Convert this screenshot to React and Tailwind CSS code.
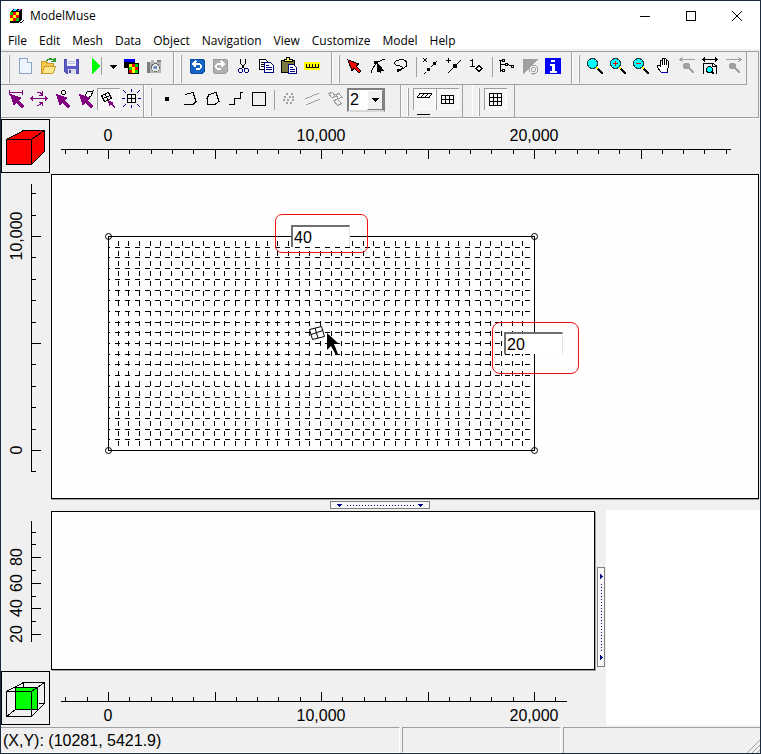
import React from 'react';

const GRAY = '#a0a0a0';
const PURPLE = '#800080';

function Tool({ label, pressed, narrow, children }) {
  return (
    <button
      type="button"
      aria-label={label}
      className={
        (narrow ? 'w-[14px] ' : 'w-[23px] ') +
        'h-[22px] shrink-0 ' +
        (pressed ? 'bg-[#f7f7f7] shadow-[inset_1px_1px_0_#a0a0a0,inset_-1px_-1px_0_#ffffff]' : '')
      }
    >
      <svg
        width={narrow ? 14 : 23}
        height="22"
        fill="none"
        stroke="#000"
        shapeRendering="crispEdges"
        className="block overflow-visible"
      >
        {children}
      </svg>
    </button>
  );
}

function Grip() {
  return <span className="mr-[4px] ml-[5px] h-[28px] w-[2px] shrink-0 border-r border-l border-r-[#a0a0a0] border-l-white" />;
}

function Separator() {
  return <span className="mx-[3px] mt-[2px] h-[20px] w-px shrink-0 bg-[#a0a0a0]" />;
}

function Band({ className = '', grip = true, children }) {
  return (
    <div className={'flex h-[32px] shrink-0 items-start border-r border-l border-r-[#a0a0a0] border-l-white pt-[3px] ' + className}>
      {grip && <Grip />}
      {children}
    </div>
  );
}

function Magnifier({ sign }) {
  return (
    <>
      <path d="M13 13l6 6" stroke="#000" strokeWidth="2.5" />
      <path d="M12 12l2 2" stroke="#ffff00" strokeWidth="2" />
      <circle cx="8.5" cy="8.5" r="5" fill="#00ffff" stroke="#204040" />
      {sign && <path d="M6 8.5h5" stroke="#e00000" />}
      {sign === '+' && <path d="M8.5 6v5" stroke="#e00000" />}
    </>
  );
}

function GrayPan({ flip }) {
  return (
    <g stroke={GRAY}>
      <path d="M4 4.5h15" />
      <path d={flip ? 'M16 2l3 2.5l-3 2.5' : 'M7 2l-3 2.5l3 2.5'} />
      <circle cx="10.5" cy="11" r="3" fill={GRAY} />
      <path d="M13 13l5 5" strokeWidth="2.5" />
    </g>
  );
}

function PurpleArrow() {
  return <path d="M5 6l12 4l-3 2l5 6l-2 2l-6-5l-2 3z" fill={PURPLE} stroke="none" />;
}

function MainToolbar() {
  return (
    <div className="flex h-[33px] w-fit border-b border-[#a0a0a0]">
      <Band className="w-[173px] pl-px">
        <Tool label="New">
          <path d="M5.500 3.500h8l4 4V18.500H5.500z" fill="#eef5ff" stroke="#8aa4c8" />
          <path d="M13.500 3.500v4h4" fill="#fff" stroke="#8aa4c8" />
        </Tool>
        <Tool label="Open">
          <path d="M4.500 17.500v-11h5l1 2h6v9z" fill="#f5c84c" stroke="#c89a28" />
          <path d="M5 18l3-7h11l-3 7z" fill="#ffe68c" stroke="#c89a28" />
          <path d="M10 6c2-3 5-3 7 0M14 6.500h4V3" stroke="#2c9a2c" strokeWidth="1.500" />
        </Tool>
        <Tool label="Save">
          <path d="M4.500 4.500h14v14h-12l-2-2z" fill="#5a5ac8" stroke="#4a4aa8" />
          <path d="M7 4h9v7H7z" fill="#f4f4ff" stroke="none" />
          <path d="M8 6.500h7M8 8.500h7" stroke="#b8b8d8" />
          <path d="M8 14h8v5H8z" fill="#d8d8e8" stroke="none" />
          <path d="M9 15h2v3H9z" fill="#4a4aa8" stroke="none" />
        </Tool>
        <Tool label="Run model">
          <path d="M9 3l8 8l-8 8z" fill="#00ff00" stroke="none" />
          <path d="M18.500 2v18" stroke={GRAY} />
        </Tool>
        <Tool label="Run options" narrow>
          <path d="M4 10h7L7.500 14z" fill="#000" stroke="none" />
        </Tool>
        <Tool label="Model selection">
          <path d="M4 4h11v9H4z" fill="#000" stroke="none" />
          <path d="M4 4h11v3H4z" fill="#0000ff" stroke="none" />
          <path d="M8 8h11v11H8z" fill="#000" stroke="none" />
          <path d="M9 9h9v9h-9z" fill="#ffff00" stroke="none" />
          <path d="M12 9h3v3h-3zM9 15h3v3h-3zM15 12h3v3h-3z" fill="#ff0000" stroke="none" />
          <path d="M9 12h3v3h-3zM15 15h3v3h-3zM15 9h3v3h-3z" fill="#00d000" stroke="none" />
        </Tool>
        <Tool label="Export image">
          <path d="M4 7h4V5h3v2h7v11H4z" fill="#b4b4b4" stroke="none" />
          <path d="M4 7h3v11H4zM14 5h4v2h-4z" fill="#7c7c7c" stroke="none" />
          <circle cx="12.500" cy="12.500" r="4" fill="#e8e8e8" stroke="#707070" />
          <circle cx="12.500" cy="12.500" r="1.500" fill="#6a8cc0" stroke="#6a8cc0" />
        </Tool>
      </Band>
      <Band className="w-[158px]">
        <Tool label="Undo">
          <rect x="4" y="4" width="14" height="14" rx="1" fill="#1464c8" stroke="#0c4a9c" />
          <path d="M7 9h5c4 0 4 5 0 5h-2M10 6l-3 3l3 3" stroke="#fff" strokeWidth="1.500" />
        </Tool>
        <Tool label="Redo">
          <rect x="4" y="4" width="14" height="14" rx="1" fill="#b0b0b0" stroke="#989898" />
          <path d="M15 9h-5c-4 0-4 5 0 5h2M12 6l3 3l-3 3" stroke="#fff" strokeWidth="1.500" />
        </Tool>
        <Tool label="Cut">
          <path d="M8.500 4v4l4 6M13.500 4v4l-4 6" stroke="#000" />
          <circle cx="8.500" cy="15.500" r="2" stroke="#000080" />
          <circle cx="14.500" cy="15.500" r="2" stroke="#000080" />
        </Tool>
        <Tool label="Copy">
          <path d="M4.500 4.500h6l2 2v8h-8z" fill="#fff" />
          <path d="M6 7.500h3M6 9.500h5M6 11.500h5" />
          <path d="M9.500 7.500h6l3 3v7h-9z" fill="#fff" stroke="#000080" />
          <path d="M11 10.500h3M11 12.500h6M11 14.500h6" stroke="#000080" />
        </Tool>
        <Tool label="Paste">
          <path d="M3.500 5.500h13v12h-13z" fill="#7a7a3c" />
          <path d="M6 6.500h8v-2h-2l-1-2H9l-1 2H6z" fill="#ffff60" />
          <path d="M10.500 9.500h5l3 3v6h-8z" fill="#fff" stroke="#000080" />
          <path d="M12 12.500h3M12 14.500h5M12 16.500h5" stroke="#000080" />
        </Tool>
        <Tool label="Measure">
          <path d="M3 7h16v8H3z" fill="#ffff00" stroke="none" />
          <path d="M5 12.500h13M5.500 9v4M8.500 9v4M11.500 9v4M14.500 9v4M17.500 9v4" />
        </Tool>
      </Band>
      <Band className="w-[240px]">
        <Tool label="Select objects">
          <path d="M4 5l11 4l-3 2l5 5l-2 2l-5-5l-2 3z" fill="#ff0000" stroke="#000" />
        </Tool>
        <Tool label="Select nodes">
          <path d="M4 18q1-5 4-8l3-3q3-2 7-3" />
          <path d="M7 6h4v3H7z" fill="#000" stroke="none" />
          <path d="M10 8l6 7h-3l1 3l-2-2l-2 1z" fill="#000" />
        </Tool>
        <Tool label="Lasso">
          <path d="M9 16h-2v-2h4q7-2 6-6q-1-4-8-3q-5 1-4 4q1 2 5 2q3 1 2 3q-1 2-4 2" />
        </Tool>
        <Separator />
        <Tool label="Delete segment">
          <path d="M3 3l4 4M7 3l-4 4" />
          <path d="M4 19L18 5" strokeDasharray="3 2" />
          <path d="M7 13h3v3H7zM13 7h3v3h-3z" fill="#000" stroke="none" />
        </Tool>
        <Tool label="Insert node">
          <path d="M3 5.500h5M5.500 3v5M5 18L18 5" />
          <path d="M10 9h4v4h-4z" fill="#000" stroke="none" />
        </Tool>
        <Tool label="Edit vertex values">
          <path d="M4 5.500h2M6.500 4v7M4 11.500h5M10 13.500l3-3l3 3l-3 3z" />
        </Tool>
        <Separator />
        <Tool label="Show or hide objects">
          <path d="M3 5.500h4M4.500 5v12M4 9.500h6M4 15.500h3M12 9.500l4 2" />
          <path d="M6.500 4.500h2v2h-2zM9.500 8.500h2v2h-2zM6.500 14.500h2v2h-2zM15.500 10.500h2v2h-2z" fill="#fff" />
        </Tool>
        <Tool label="Show contours">
          <path d="M4 4h15L4 19z" fill={GRAY} stroke="none" />
          <circle cx="14.500" cy="14.500" r="4.500" fill="#f0f0f0" stroke={GRAY} />
          <circle cx="14.500" cy="14.500" r="2" stroke={GRAY} />
        </Tool>
        <Tool label="Information">
          <path d="M3 3h16v16H3z" fill="#0000ff" stroke="none" />
          <path d="M9 5h4v2H9zM8 9h5v7h2v2H8v-2h2v-5H8z" fill="#fff" stroke="none" />
        </Tool>
      </Band>
      <Band className="w-[175px]">
        <Tool label="Zoom"><Magnifier /></Tool>
        <Tool label="Zoom in"><Magnifier sign="+" /></Tool>
        <Tool label="Zoom out"><Magnifier sign="-" /></Tool>
        <Tool label="Pan">
          <path
            d="M8 17l-4-5q0-3 3-1V6q1-2 2 0v4V4q1-2 2 0v6V4q1-2 2 0v6V6q2-2 2 0v7l-1 4z"
            fill="#fff"
          />
          <path d="M8 17.500h7" stroke="#0000c0" />
        </Tool>
        <Tool label="Previous view"><GrayPan /></Tool>
        <Tool label="Zoom to extents">
          <path d="M4 4.500h14M6 2.500l-2 2l2 2M16 2.500l2 2l-2 2M4.500 19v-11h9l4 3v8" />
          <path d="M13.500 8v3h4" />
          <circle cx="10.500" cy="14.500" r="3" fill="#00ffff" />
          <path d="M13 17l2 2" strokeWidth="1.500" />
        </Tool>
        <Tool label="Next view"><GrayPan flip /></Tool>
      </Band>
    </div>
  );
}

function DrawToolbar() {
  return (
    <div className="flex h-[33px] border-b border-[#a0a0a0]">
      <Band grip={false} className="w-[143px] pl-[3px]">
        <Tool label="Delete grid line">
          <path d="M4 4.500h14M4.500 2v5M17.500 2v5" stroke={PURPLE} />
          <PurpleArrow />
        </Tool>
        <Tool label="Move grid line">
          <path d="M3 10.500h16M5 8.500l-2 2l2 2M17 8.500l2 2l-2 2M9 5q3-2 5 2M14 3v4h-3M9 17q3 1 5-3M14 18v-4h-3" stroke={PURPLE} />
        </Tool>
        <Tool label="Move node">
          <circle cx="12.500" cy="4.500" r="2" />
          <PurpleArrow />
        </Tool>
        <Tool label="Move element">
          <path d="M11 8l2-4l6-1l-2 5l-4 2z" fill="#fff" />
          <PurpleArrow />
        </Tool>
        <Tool label="Generate grid" pressed>
          <path d="M4.500 7.500l7-3l3 6l-7 3zM8 6l3 6M6 10.500l7-3" />
          <path d="M11 12l6 3l-2 1l3 3l-1 1l-3-3l-2 1z" fill={PURPLE} stroke="none" />
        </Tool>
        <Tool label="Grid extents">
          <path d="M7 6.500h9M7 10.500h9M7 14.500h9M7.500 6v9M11.500 6v9M15.500 6v9" />
          <path d="M11.500 1v3M11.500 17v3M2 10.500h3M18 10.500h3M3 2l3 3M20 2l-3 3M3 19l3-3M20 19l-3-3" stroke="#0000a0" />
        </Tool>
      </Band>
      <Band className="w-[257px]">
        <Tool label="Point object"><circle cx="11" cy="11" r="2.500" fill="#000" stroke="none" /></Tool>
        <Tool label="Polyline object"><path d="M6 6.500l8-2l3 9l-3 3H5" /></Tool>
        <Tool label="Polygon object"><path d="M7 6.500l7-2l3 9l-4 3l-7 0l-1-6z" /></Tool>
        <Tool label="Straight line object"><path d="M4 16.500h5.500v-6h5.500V4.500h3" /></Tool>
        <Tool label="Rectangle object"><path d="M4.500 4.500h13v13h-13z" /></Tool>
        <Separator />
        <Tool label="Multiple points">
          <path d="M8 6h2M13 6h2M6 9h2M11 9h2M5 12h2M9 12h2M14 12h2M8 15h2M12 15h2M14 9h2" stroke={GRAY} strokeWidth="2" />
        </Tool>
        <Tool label="Multiple polylines"><path d="M4 11l14-6M5 17l14-6" stroke={GRAY} /></Tool>
        <Tool label="Multiple polygons">
          <path d="M4.500 5.500l4-1l3 4l-4 1zM12 6.500l3-1l3 4l-4 1zM9.500 12.500l4-1l4 4l-4 2z" stroke={GRAY} />
        </Tool>
        <div className="relative h-[24px] w-[38px]">
          <select
            aria-label="Vertical exaggeration"
            defaultValue="2"
            className="h-[24px] w-[38px] appearance-none border-2 border-t-[#808080] border-r-[#808080] border-b-[#d8d8d8] border-l-[#808080] bg-white pl-px font-['Liberation_Sans',sans-serif] text-[16px] leading-[20px]"
          >
            <option>2</option>
          </select>
          <span className="pointer-events-none absolute top-[2px] right-[2px] flex h-[20px] w-[16px] items-center justify-center border border-t-white border-r-[#808080] border-b-[#808080] border-l-white bg-[#f0f0f0]">
            <svg width="7" height="4" shapeRendering="crispEdges"><path d="M0 0h7L3.500 4z" /></svg>
          </span>
        </div>
      </Band>
      <Band className="w-[62px]">
        <div className="relative flex">
          <Tool label="Perspective cells" pressed>
            <path d="M4 9.500h12M7 5.500h12M4 9.500l3-4M8 9.500l3-4M12 9.500l3-4M16 9.500l3-4" />
          </Tool>
          <Tool label="Show grid" pressed>
            <path d="M5.500 7.500h12v8h-12zM5 11.500h12M9.500 7v9M13.500 7v9" />
          </Tool>
          <span className="absolute top-[26px] left-[4px] h-px w-[13px] bg-black" />
        </div>
      </Band>
      <Band className="ml-[9px] w-[43px]">
        <Tool label="Grid display" pressed>
          <path d="M5.500 5.500h12v12h-12zM5 9.500h12M5 13.500h12M9.500 5v12M13.500 5v12" />
        </Tool>
      </Band>
    </div>
  );
}

const MENUS = ['File', 'Edit', 'Mesh', 'Data', 'Object', 'Navigation', 'View', 'Customize', 'Model', 'Help'];

function TitleBar() {
  return (
    <header className="flex h-[30px] shrink-0 items-center bg-white">
      <svg width="16" height="16" className="ml-[8px]" shapeRendering="crispEdges" aria-hidden="true">
        <path d="M1 4l3-3h9v10l-3 4H1z" />
        <path d="M3 3l2-2h3L6 3z" fill="#00e0ff" />
        <path d="M8 3l2-2h2l-2 2z" fill="#e040e0" />
        <path d="M1 4h9v9H1z" fill="#ffff00" />
        <path d="M4 4h3v3H4zM1 7h3v3H1zM7 7h3v3H7zM4 10h3v3H4z" fill="#ff0000" />
        <path d="M1 4h3v3H1zM7 10h3v3H7z" fill="#00c800" />
        <path d="M11 14h2l2-2" fill="none" stroke="#000" />
      </svg>
      <h1 className="ml-[5px] text-[12px] leading-[16px]">ModelMuse</h1>
      <div className="ml-auto flex">
        <button type="button" aria-label="Minimize" className="flex h-[29px] w-[46px] items-center justify-center">
          <svg width="10" height="10" stroke="#000" shapeRendering="crispEdges"><path d="M0 5.500h10" /></svg>
        </button>
        <button type="button" aria-label="Maximize" className="flex h-[29px] w-[46px] items-center justify-center">
          <svg width="10" height="10" fill="none" stroke="#000" shapeRendering="crispEdges"><path d="M.5 .5h9v9h-9z" /></svg>
        </button>
        <button type="button" aria-label="Close" className="flex h-[29px] w-[46px] items-center justify-center">
          <svg width="10" height="10" stroke="#000"><path d="M0 0l10 10M10 0L0 10" /></svg>
        </button>
      </div>
    </header>
  );
}

const range = (from, to) => Array.from({ length: to - from + 1 }, (_, i) => from + i);

function TopRuler() {
  return (
    <svg className="block h-[55px] w-full min-w-0" fontSize="16" textAnchor="middle">
      <g stroke="#000" shapeRendering="crispEdges">
        <path d="M10 30.500H680" />
        {range(-2, 29).map((k) => (
          <path key={k} d={`M${Math.round(57 + k * 21.3) + 0.5} 30v${k % 5 === 0 ? 10 : 5}`} />
        ))}
      </g>
      <text x="57" y="22">0</text>
      <text x="270" y="22">10,000</text>
      <text x="483" y="22">20,000</text>
    </svg>
  );
}

function BottomRuler() {
  return (
    <svg className="block h-[54px] w-full min-w-0" fontSize="16" textAnchor="middle">
      <g stroke="#000" shapeRendering="crispEdges">
        <path d="M10 30.500H516" />
        {range(-2, 21).map((k) => (
          <path key={k} d={`M${Math.round(57 + k * 21.3) + 0.5} 31v${k % 5 === 0 ? -10 : -5}`} />
        ))}
      </g>
      <text x="57" y="50">0</text>
      <text x="270" y="50">10,000</text>
      <text x="483" y="50">20,000</text>
    </svg>
  );
}

function FrontRuler() {
  return (
    <svg className="block h-full w-[50px]" fontSize="16" textAnchor="middle">
      <g stroke="#000" shapeRendering="crispEdges">
        <path d="M30.500 10V298" />
        {range(-1, 12).map((k) => (
          <path key={k} d={`M30 ${Math.round(276 - k * 21.4) + 0.5}h${k % 5 === 0 ? 10 : 5}`} />
        ))}
      </g>
      <text transform="translate(21 62) rotate(-90)">10,000</text>
      <text transform="translate(21 276) rotate(-90)">0</text>
    </svg>
  );
}

function SideRuler() {
  return (
    <svg className="block h-[160px] w-[50px]" fontSize="16" textAnchor="middle">
      <g stroke="#000" shapeRendering="crispEdges">
        <path d="M30.500 10V131" />
        {range(0, 8).map((k) => (
          <path key={k} d={`M30 ${Math.round(123 - k * 12.8) + 0.5}h${k % 2 === 0 && k < 8 ? 10 : 5}`} />
        ))}
      </g>
      <text transform="translate(21 46) rotate(-90)">80</text>
      <text transform="translate(21 72) rotate(-90)">60</text>
      <text transform="translate(21 97) rotate(-90)">40</text>
      <text transform="translate(21 123) rotate(-90)">20</text>
    </svg>
  );
}

function GridDrawing() {
  return (
    <svg className="block h-full w-full" fill="none" stroke="#000">
      <g shapeRendering="crispEdges">
        {range(1, 39).map((k) => (
          <path key={k} d={`M${Math.round(56 + k * 10.65) - 0.5} 66V275`} strokeDasharray="5 5" />
        ))}
        {range(1, 19).map((k) => {
          const y = Math.round(61 + k * 10.7) + 0.5;
          return (
            <g key={k}>
              <path d={`M57 ${y}h1`} />
              <path d={`M63 ${y}H482`} strokeDasharray="5 5" />
            </g>
          );
        })}
        <path d="M56.500 61.500H482.500V275.500H56.500z" />
      </g>
      {[[56.5, 61.5], [482.5, 61.5], [56.5, 275.5], [482.5, 275.5]].map(([x, y]) => (
        <circle key={`${x}-${y}`} cx={x} cy={y} r="3" />
      ))}
      <path d="M257.500 154.500l12-3l3 10l-12 3zM263 153l3 10M259 159.500l12-4" fill="#fff" />
      <path d="M275 158l12 11h-5l4 10l-2 1l-5-9l-4 4z" fill="#000" stroke="none" />
    </svg>
  );
}

const COUNT_INPUT =
  "absolute h-[22px] w-[59px] border-2 border-r border-b-0 border-t-[#707070] border-r-[#e3e3e3] border-l-[#707070] bg-white pt-px pl-px text-[16px] leading-[20px] outline-none";

function ModelCanvas() {
  return (
    <main className="relative mr-px min-h-0 min-w-0 border border-black bg-[#fefefe] shadow-[0_1px_0_#a0a0a0]">
      <GridDrawing />
      <input aria-label="Number of columns" defaultValue="40" className={COUNT_INPUT + ' top-[50px] left-[239px]'} />
      <input aria-label="Number of rows" defaultValue="20" className={COUNT_INPUT + ' top-[157px] left-[452px]'} />
      <span className="pointer-events-none absolute top-[39px] left-[223px] h-[39px] w-[93px] rounded-[7px] border border-[#f01010]" />
      <span className="pointer-events-none absolute top-[147px] left-[440px] h-[52px] w-[87px] rounded-[8px] border border-[#f01010]" />
    </main>
  );
}

function RedCube() {
  return (
    <button type="button" aria-label="Top view" className="h-[54px] w-[49px] border border-black">
      <svg width="47" height="52" fill="#ff0000" stroke="#000" shapeRendering="crispEdges">
        <path d="M4.500 19.500L21.500 10.500H42.500V31.500L29.500 44.500H4.500zM4.500 19.500H29.500V44.500M29.500 19.500L42.500 10.500" />
      </svg>
    </button>
  );
}

function GreenCube() {
  return (
    <button type="button" aria-label="Front view" className="h-[54px] w-[49px] border border-black">
      <svg width="47" height="52" fill="none" stroke="#000" shapeRendering="crispEdges">
        <path d="M21.500 10V32M37 31.500h6M4.500 44.500l9-7" />
        <path d="M13.500 15.500h22v22h-22z" fill="#00ff00" />
        <path d="M4.500 19.500L21.500 10.500H42.500V31.500L29.500 44.500H4.500zM4.500 19.500H29.500V44.500M29.500 19.500L42.500 10.500" />
      </svg>
    </button>
  );
}

function HorizontalSplitter() {
  return (
    <div className="flex h-[11px] shrink-0 items-center justify-center pt-px pr-[2px]">
      <button type="button" aria-label="Collapse lower views" className="h-[8px] w-[100px] border border-[#808080] bg-[#f7f7f7]">
        <svg width="98" height="6" className="block" fill="#000080" shapeRendering="crispEdges">
          <path d="M6 2h5L8.500 5zM87 2h5L89.500 5z" />
          <path d="M16 3.500h68" stroke="#000080" strokeDasharray="1 2" />
        </svg>
      </button>
    </div>
  );
}

function VerticalSplitter() {
  return (
    <div className="flex w-[11px] shrink-0 items-center justify-center pb-[2px]">
      <button type="button" aria-label="Collapse 3D view" className="h-[100px] w-[8px] border border-[#808080] bg-[#f7f7f7]">
        <svg width="6" height="98" className="block" fill="#000080" shapeRendering="crispEdges">
          <path d="M2 6v5L5 8.500zM2 87v5L5 89.500z" />
          <path d="M3.500 16v68" stroke="#000080" strokeDasharray="1 2" />
        </svg>
      </button>
    </div>
  );
}

const STATUS_CELL = 'border-t border-t-[#a0a0a0] border-r border-r-white border-b border-b-white';

export default function App() {
  return (
    <div className="flex h-screen min-h-[600px] flex-col border border-[#1c2b3c] bg-[#f0f0f0] font-['Liberation_Sans',Arial,sans-serif] text-[16px] leading-[20px] text-black">
      <div className="shrink-0 bg-white font-['Open_Sans','Noto_Sans',sans-serif]">
        <TitleBar />
        <nav className="flex h-[18px] items-center gap-[12px] pt-px pl-[7px] text-[12px] leading-[16px]">
          {MENUS.map((name) => (
            <button key={name} type="button">{name}</button>
          ))}
        </nav>
      </div>
      <div className="mt-[2px] mr-px shrink-0 overflow-hidden border-t border-r border-[#a0a0a0]">
        <MainToolbar />
        <DrawToolbar />
      </div>
      <div className="grid min-h-0 flex-1 grid-cols-[50px_1fr] grid-rows-[55px_1fr] border-t border-white">
        <RedCube />
        <TopRuler />
        <FrontRuler />
        <ModelCanvas />
      </div>
      <HorizontalSplitter />
      <div className="flex shrink-0">
        <div className="grid min-w-0 flex-1 grid-cols-[50px_1fr] grid-rows-[160px_54px] pt-px">
          <SideRuler />
          <div className="mb-px border border-black bg-[#fefefe] shadow-[1px_1px_0_#a0a0a0]" />
          <GreenCube />
          <BottomRuler />
        </div>
        <VerticalSplitter />
        <aside className="w-[154px] shrink-0 bg-white" aria-label="3D view" />
      </div>
      <footer className="mt-[2px] flex h-[26px] shrink-0 gap-[2px]">
        <p className={STATUS_CELL + ' min-w-0 flex-1 overflow-hidden pl-[2px] leading-[26px] whitespace-nowrap'}>(X,Y): (10281, 5421.9)</p>
        <div className={STATUS_CELL + ' w-[159px] shrink-0 border-l border-l-[#a0a0a0]'} />
        <div className="flex w-[197px] shrink-0 items-end justify-end border-t border-l border-[#a0a0a0]">
          <svg width="14" height="14" stroke={GRAY} aria-hidden="true"><path d="M1 14L14 1M6 14l8-8M11 14l3-3" /></svg>
        </div>
      </footer>
    </div>
  );
}
